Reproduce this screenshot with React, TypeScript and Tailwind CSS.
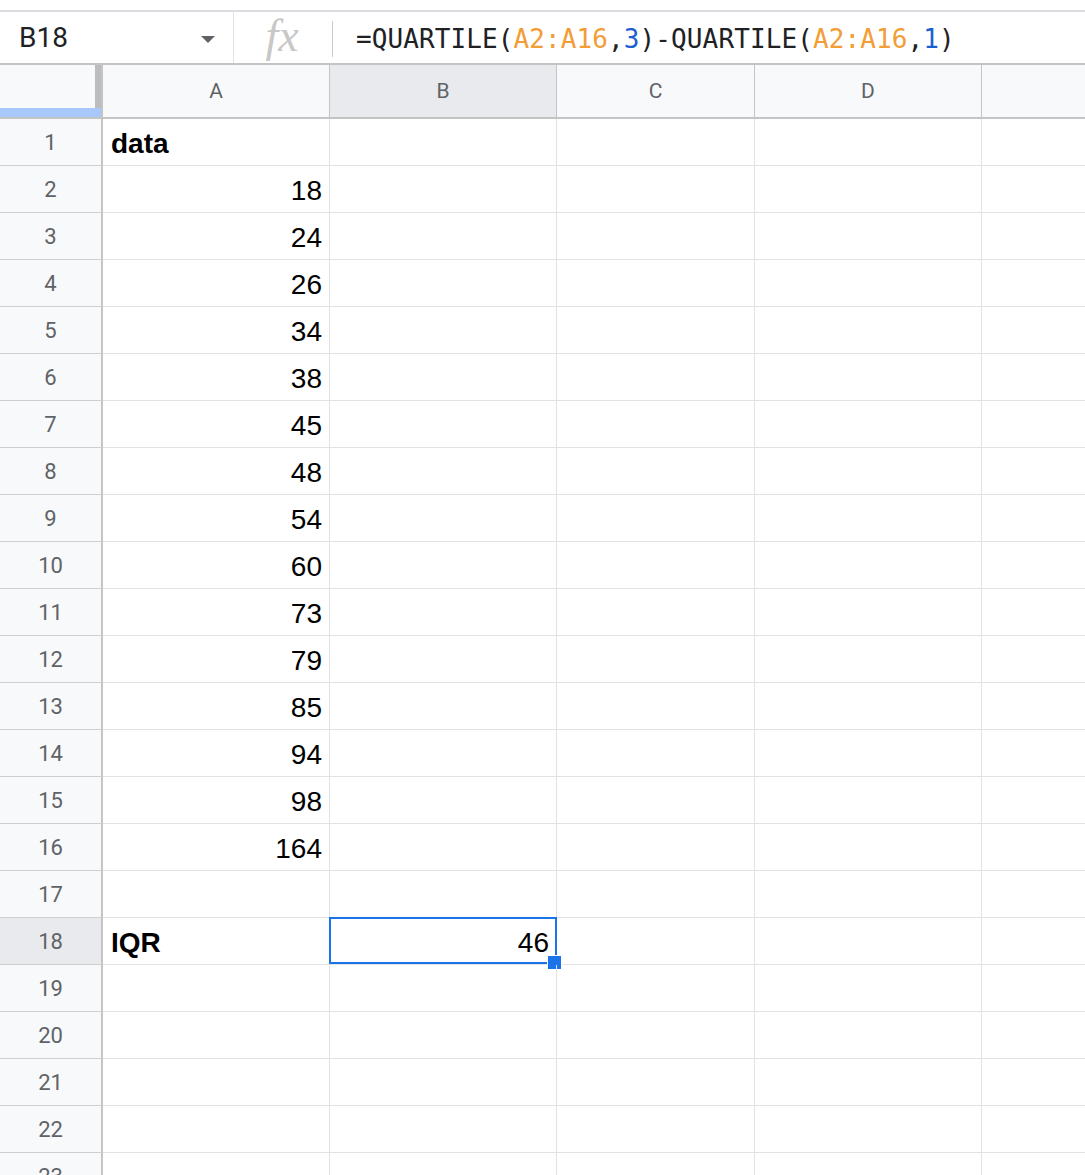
import React from 'react';

const values = [18, 24, 26, 34, 38, 45, 48, 54, 60, 73, 79, 85, 94, 98, 164];

type Cell = { text?: string; bold?: boolean; right?: boolean };

const rows: { a: Cell; b: Cell }[] = [
  { a: { text: 'data', bold: true }, b: {} },
  ...values.map(v => ({ a: { text: String(v), right: true }, b: {} })),
  { a: {}, b: {} },
  { a: { text: 'IQR', bold: true }, b: { text: '46', right: true } },
  { a: {}, b: {} },
  { a: {}, b: {} },
  { a: {}, b: {} },
  { a: {}, b: {} },
  { a: {}, b: {} },
];

const SELECTED_ROW = 18;

const CellText: React.FC<{ cell: Cell }> = ({ cell }) => {
  if (!cell.text) return null;
  return (
    <span
      className={`w-full pt-[4px] font-['Liberation_Sans',Arial,sans-serif] text-[28px] leading-none text-black ${
        cell.bold ? 'font-bold' : ''
      } ${cell.right ? 'text-right pr-[7px]' : 'pl-[8px]'}`}
    >
      {cell.text}
    </span>
  );
};

const FormulaBar: React.FC = () => {
  const orange = 'text-[#f29d35]';
  const blue = 'text-[#1a5fd0]';
  return (
    <div className="h-[53px] border-t-2 border-[#dadce0] flex items-stretch">
      <div className="w-[233px] flex items-center justify-between pl-[19px] pr-[18px]">
        <span className="font-['Roboto',sans-serif] text-[28px] text-[#202124] leading-none">B18</span>
        <svg width="14" height="7" viewBox="0 0 14 7" className="mt-[3px]">
          <path d="M0 0 L14 0 L7 7 Z" fill="#5f6368" />
        </svg>
      </div>
      <div className="w-px bg-[#e3e3e3]" />
      <div className="w-[98px] flex items-center justify-center">
        <span className="font-['Liberation_Serif',serif] italic text-[46px] leading-none text-[#c8c8c8] -mt-[4px] pr-[2px]">
          fx
        </span>
      </div>
      <div className="w-px h-[36px] self-center bg-[#c9c9c9] mt-[2px]" />
      <div className="flex items-center pl-[23px] pt-[2px] font-['DejaVu_Sans_Mono',monospace] text-[26px] leading-none text-[#202124] tracking-[0.1px]">
        <span>=QUARTILE(</span>
        <span className={orange}>A2:A16</span>
        <span>,</span>
        <span className={blue}>3</span>
        <span>)-QUARTILE(</span>
        <span className={orange}>A2:A16</span>
        <span>,</span>
        <span className={blue}>1</span>
        <span>)</span>
      </div>
    </div>
  );
};

const HeaderRow: React.FC = () => {
  const cols = [
    { label: 'A', w: 'w-[227px]', sel: false },
    { label: 'B', w: 'w-[227px]', sel: true },
    { label: 'C', w: 'w-[198px]', sel: false },
    { label: 'D', w: 'w-[227px]', sel: false },
  ];
  return (
    <div className="h-[56px] border-y-2 border-[#c4c4c4] flex bg-[#f8f9fa]">
      <div className="w-[103px] shrink-0 border-r-2 border-[#c4c4c4] flex flex-col">
        <div className="flex-1 flex justify-end">
          <div className="w-[6px] bg-[#bdbdbd]" />
        </div>
        <div className="h-[9px] bg-[#a8c7fa]" />
      </div>
      {cols.map(c => (
        <div
          key={c.label}
          className={`${c.w} shrink-0 border-r border-[#c4c4c4] flex items-center justify-center pt-[2px] font-['Roboto',sans-serif] text-[21px] text-[#5f6368] ${
            c.sel ? 'bg-[#e8eaed]' : ''
          }`}
        >
          {c.label}
        </div>
      ))}
      <div className="flex-1" />
    </div>
  );
};

export default function App() {
  return (
    <div className="w-[1085px] h-[1175px] overflow-hidden bg-white">
      <div className="h-[10px]" />
      <FormulaBar />
      <HeaderRow />
      {rows.map((r, i) => {
        const n = i + 1;
        const sel = n === SELECTED_ROW;
        return (
          <div key={n} className="h-[47px] flex">
            <div
              className={`w-[103px] shrink-0 border-r-2 border-b border-r-[#c4c4c4] border-b-[#cfcfcf] flex items-center justify-center font-['Roboto',sans-serif] text-[22px] text-[#5f6368] ${
                sel ? 'bg-[#e8eaed]' : 'bg-[#f8f9fa]'
              }`}
            >
              {n}
            </div>
            <div className="w-[227px] shrink-0 border-r border-b border-[#e2e2e2] flex items-center">
              <CellText cell={r.a} />
            </div>
            <div className="w-[227px] shrink-0 border-r border-b border-[#e2e2e2] flex items-center relative">
              <CellText cell={r.b} />
              {sel && (
                <div className="absolute -top-px -left-px -right-px bottom-0 border-2 border-[#1a73e8]">
                  <div className="absolute -right-[7px] -bottom-[8px] w-[15px] h-[15px] bg-[#1a73e8] border border-white" />
                </div>
              )}
            </div>
            <div className="w-[198px] shrink-0 border-r border-b border-[#e2e2e2]" />
            <div className="w-[227px] shrink-0 border-r border-b border-[#e2e2e2]" />
            <div className="flex-1 border-b border-[#e2e2e2]" />
          </div>
        );
      })}
    </div>
  );
}
